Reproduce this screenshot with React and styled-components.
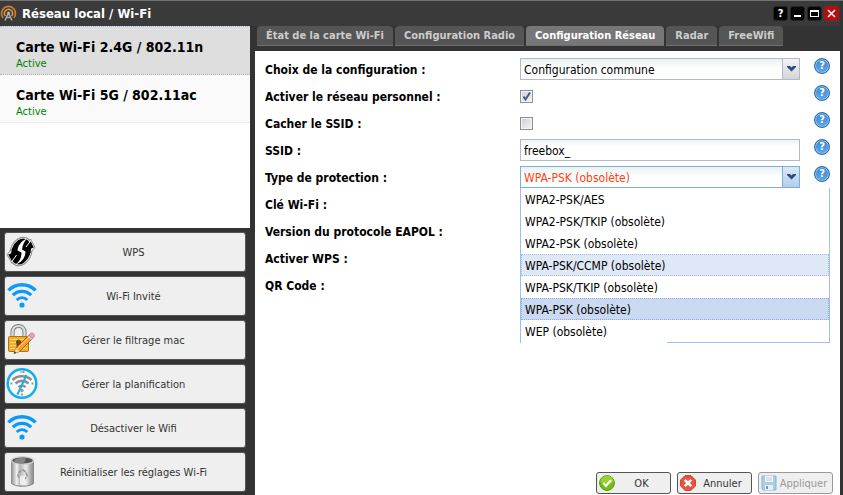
import React, { useState } from "react";
import styled, { createGlobalStyle } from "styled-components";

const GlobalStyle = createGlobalStyle`
  * {
    box-sizing: border-box;
  }

  body {
    margin: 0;
    background: #333;
    font-family: "DejaVu Sans Condensed", Tahoma, "Noto Sans", sans-serif;
    font-size: 12px;
    color: #000;
  }

  button,
  input,
  select {
    font: inherit;
    color: inherit;
    margin: 0;
  }
`;

const Window = styled.div`
  display: flex;
  flex-direction: column;
  min-height: 100vh;
  padding-right: 3px;
  background: #333;
  border-top: 1px solid #6f7373;
`;

const TitleBar = styled.header`
  display: flex;
  align-items: center;
  gap: 5px;
  height: 25px;
  background: #3a3a3a;
  color: #fff;

  h1 {
    flex: 1;
    margin: 0;
    font-size: 13px;
    line-height: 16px;
  }
`;

const WindowTools = styled.div`
  display: flex;
  gap: 4px;
  padding-right: 2px;
`;

const ToolButton = styled.button`
  display: grid;
  place-items: center;
  width: 13px;
  height: 13px;
  padding: 0;
  border: 0;
  border-radius: 2px;
  background: ${(props) => (props.$danger ? "#c3080b" : "#050505")};
  box-shadow: 0 0 0 1px ${(props) => (props.$danger ? "#8d2020" : "#252525")};
  color: #fff;
  font-weight: bold;
  font-size: 11px;
  line-height: 13px;
`;

const Body = styled.div`
  display: flex;
  flex: 1;
  gap: 5px;
`;

const Sidebar = styled.aside`
  display: flex;
  flex-direction: column;
  width: 250px;
`;

const CardList = styled.ul`
  flex: 1;
  margin: 0;
  padding: 0;
  list-style: none;
  background: #fff;
`;

const CardItem = styled.li`
  height: ${(props) => (props.$active ? 49 : 48)}px;
  padding: 12px 16px 0;
  background: ${(props) => (props.$active ? "#dedede" : "#fafafa")};
  border-bottom: 1px ${(props) => (props.$active ? "dotted #b4b4b4" : "solid #ededed")};
  ${(props) => props.$active && "border-top: 1px dotted #a3bae9;"}

  h2 {
    margin: 0;
    font-size: 14px;
    line-height: 17px;
  }

  p {
    margin: 0;
    font-size: 11px;
    line-height: 16px;
    color: #008000;
  }
`;

const ActionList = styled.div`
  display: flex;
  flex-direction: column;
  gap: 4px;
  padding: 4px 4px 3px;
`;

const ActionButton = styled.button`
  display: flex;
  align-items: center;
  height: 40px;
  padding: 0 1px;
  border: 1px solid #555;
  border-radius: 3px;
  background: #efefef;
  color: #333;
  font-size: 11px;

  svg {
    flex: none;
  }

  span {
    flex: 1;
    padding-right: 15px;
  }
`;

const Main = styled.main`
  display: flex;
  flex: 1;
  flex-direction: column;
`;

const Tabs = styled.nav`
  display: flex;
  gap: 2px;
  padding: 0 2px 5px;
`;

const Tab = styled.button`
  height: 20px;
  padding: 0 9px;
  border: 0;
  border-bottom: 1px solid #707070;
  border-radius: 4px 4px 0 0;
  background: ${(props) => (props.$active ? "#777" : "#555")};
  color: ${(props) => (props.$active ? "#fff" : "#ccc")};
  font-size: 11px;
  font-weight: bold;
  white-space: nowrap;
`;

const Panel = styled.section`
  display: flex;
  flex: 1;
  flex-direction: column;
  justify-content: space-between;
  background: #fff;
`;

const Form = styled.form`
  display: flex;
  flex-direction: column;
  gap: 5px;
  padding: 7px 10px 0;
`;

const Row = styled.div`
  display: flex;
  height: 22px;
`;

const Label = styled.label`
  width: 255px;
  font-weight: bold;
  font-size: 12px;
  line-height: 24px;
`;

const Field = styled.div`
  position: relative;
  display: flex;
  align-items: center;
  width: 280px;
  margin-right: 14px;
`;

const TextInput = styled.input`
  width: 100%;
  height: 22px;
  padding: 1px 3px 0;
  border: 1px solid #b5b8c8;
  background: linear-gradient(#eef2f2, #fff 6px);
  outline: 0;
`;

const SelectBox = styled.div`
  display: grid;
  width: 100%;
  height: 22px;
  border: 1px solid ${(props) => (props.$open ? "#7eadd9" : "#b5b8c8")};
  background: linear-gradient(#eaf1ef, #fff 10px);

  select,
  span {
    grid-area: 1 / 1;
  }

  select {
    appearance: none;
    padding: 1px 20px 0 3px;
    border: 0;
    outline: 0;
    background: transparent;
    color: ${(props) => (props.$open ? "#ff4013" : "#000")};
  }

  span {
    display: grid;
    place-items: center;
    justify-self: end;
    width: 17px;
    border-left: 1px solid ${(props) => (props.$open ? "#7eadd9" : "#b5b8c8")};
    background: ${(props) =>
      props.$open
        ? "linear-gradient(#dbe8f8, #b3cdec)"
        : "linear-gradient(#f4f4f4, #d4d4d8)"};
    pointer-events: none;
  }
`;

const CheckBox = styled.div`
  display: grid;

  input,
  svg {
    grid-area: 1 / 1;
  }

  input {
    appearance: none;
    width: 13px;
    height: 13px;
    border: 1px solid #8e8f8f;
    background: linear-gradient(135deg, #cbcfd5, #f6f6f6);
    box-shadow: inset 0 0 0 1px #f4f4f4;
  }

  svg {
    visibility: hidden;
    pointer-events: none;
  }

  input:checked + svg {
    visibility: visible;
  }
`;

const HelpButton = styled.button`
  display: grid;
  place-items: center;
  width: 16px;
  height: 16px;
  padding: 0;
  border: 1px solid #1f66b0;
  border-radius: 50%;
  background: linear-gradient(#3b86cf, #61a8e6);
  box-shadow: inset 0 0 0 1px #8fc0ec;
  color: #fff;
  font-size: 11px;
  font-weight: bold;
  line-height: 14px;
`;

const OptionList = styled.ul`
  position: absolute;
  z-index: 1;
  top: 22px;
  left: 0;
  width: 310px;
  margin: 0;
  padding: 0;
  list-style: none;
  background: #fff;
  border: solid #98c0f4;
  border-width: 0 1px;

  &::after {
    content: "";
    display: block;
    height: 1px;
    margin-left: 146px;
    background: #98c0f4;
  }
`;

const optionColors = {
  hover: "background: #dfe8f6; border-color: #a3bae9;",
  selected: "background: #cbdaf0; border-color: #8eabe4;"
};

const Option = styled.li`
  height: 22px;
  padding: 1px 3px 0;
  border: 1px dotted #fff;
  line-height: 20px;
  cursor: pointer;
  ${(props) => optionColors[props.$state]}
`;

const Footer = styled.footer`
  display: flex;
  justify-content: flex-end;
  gap: 6px;
  padding: 0 7px 1px;
`;

const FooterButton = styled.button`
  display: flex;
  align-items: center;
  width: 75px;
  height: 22px;
  padding: 0 2px;
  border: 1px solid #555;
  border-radius: 3px;
  background: #efefef;
  color: #333;
  font-size: 11px;

  svg {
    flex: none;
  }

  span {
    flex: 1;
  }

  &:disabled {
    border-color: #999;
    color: #999;
  }
`;

const AntennaIcon = () => (
  <svg width="17" height="17" viewBox="0 0 17 17" fill="none">
    <path d="M3.2 13A7 7 0 1 1 13.8 13" stroke="#c87f35" strokeWidth="1.7" />
    <path d="M5.4 11A4 4 0 1 1 11.6 11" stroke="#e29a45" strokeWidth="1.5" />
    <path d="M8.5 8L5 15.5M8.5 8L12 15.5M6.5 12.5H10.5" stroke="#aaa" strokeWidth="1.5" />
    <circle cx="8.5" cy="8" r="1.5" fill="#bbb" />
  </svg>
);

const WpsIcon = () => (
  <svg width="32" height="32" viewBox="0 0 32 32">
    <ellipse cx="15" cy="15.5" rx="10.6" ry="14.6" transform="rotate(20 15 15.5)" fill="#fff" stroke="#888" />
    <path d="M1 18.5L7 12L12.500 18.500L6 27.500Z" fill="#fff" stroke="#888" />
    <path d="M29 11.500L23 18L18 11L24.500 3Z" fill="#fff" stroke="#888" />
    <ellipse cx="15" cy="15.5" rx="9.4" ry="13.4" transform="rotate(20 15 15.5)" fill="#000" />
    <path d="M21 2.500C15.500 4.500 12 9.500 11.500 14.500L15.500 16.500C15.500 21 14 25.500 9.500 28.500C16 26.500 19.500 21 19.500 15.500L16 13.500C16.500 9 18 6 21 2.500Z" fill="#fff" />
    <path d="M2.200 18.500L6 17L11 18L6 25.500Z" fill="#000" />
    <path d="M27.800 11.500L24 13L19.500 12L24.500 5Z" fill="#000" />
    <path d="M6 25.500L10.500 19" stroke="#fff" />
    <path d="M24.500 5L20 11" stroke="#fff" />
  </svg>
);

const WifiIcon = () => (
  <svg width="32" height="32" viewBox="0 0 32 32" fill="none" stroke="#0b99fb">
    <path d="M2.4 10.4C10 2.8 22 2.8 29.6 10.4" strokeWidth="3.4" />
    <path d="M6.8 15.2C12 10 20 10 25.2 15.2" strokeWidth="3.2" />
    <path d="M10.7 20C13.8 17 18.2 17 21.3 20" strokeWidth="3" />
    <circle cx="16" cy="25" r="2.6" fill="#0b99fb" stroke="none" />
  </svg>
);

const LockIcon = () => (
  <svg width="32" height="32" viewBox="0 0 32 32">
    <path d="M6.5 14V8C6.5 0 18.5 0 18.5 8V14" fill="none" stroke="#858585" strokeWidth="4.2" />
    <path d="M6.5 14V8C6.5 0 18.5 0 18.5 8V14" fill="none" stroke="#dedede" strokeWidth="2.2" />
    <rect x="2.5" y="12.5" width="20" height="15" rx="1" fill="#f1ae2e" stroke="#b37309" />
    <path d="M4 15.5H21M4 18.5H21M4 21.5H21M4 24.5H21" stroke="#ffd466" />
    <path d="M12.5 15.5a2.6 2.6 0 0 1 2 4.2V24h-4v-4.3a2.6 2.6 0 0 1 2-4.2Z" fill="#6a460c" />
    <path d="M8 29.5L10 24L23.500 10.500L27 14L13.500 27.500Z" fill="#ff9d2b" stroke="#a65e15" />
    <path d="M8 29.5L10 24L13.500 27.500Z" fill="#f8dda9" />
    <path d="M8 29.5L8.800 27.300L10.300 28.700Z" fill="#333" />
    <path d="M11.500 24.500L24 12" stroke="#ffd27d" />
    <path d="M21.500 12.500L23 11L26.500 14.500L25 16Z" fill="#cacddd" />
    <path d="M23 11L25 9C26.500 8 29.500 11 28.500 12.500L26.500 14.500Z" fill="#eaa4af" stroke="#bd7181" strokeWidth="0.6" />
  </svg>
);

const ScheduleIcon = () => (
  <svg width="32" height="32" viewBox="0 0 32 32" fill="none">
    <circle cx="16" cy="15.500" r="14.300" fill="#fafafa" stroke="#12aff0" strokeWidth="2.500" />
    <path d="M14.500 4h1M16.500 4h2M4.500 15.500h2M25.500 15.500h2M15 26.500h2" stroke="#999" strokeWidth="1.800" />
    <g stroke="#8f8f8f" strokeWidth="2.600">
      <path d="M6.500 12C11.500 7 20.500 7 25.500 12" />
      <path d="M9.500 15.500C13 12 19 12 22.500 15.500" />
      <path d="M12.500 19.200C14.500 17.200 17.500 17.200 19.500 19.200" />
    </g>
    <circle cx="16" cy="22.500" r="1.700" fill="#999" />
    <path d="M20.500 7L11.500 26.500" stroke="#12aff0" strokeWidth="2" />
  </svg>
);

const TrashIcon = () => (
  <svg width="32" height="32" viewBox="0 0 32 32">
    <defs>
      <linearGradient id="metal">
        <stop offset="0" stopColor="#8b8b8b" />
        <stop offset="0.25" stopColor="#f1f1f1" />
        <stop offset="0.4" stopColor="#b5b5b5" />
        <stop offset="0.65" stopColor="#eee" />
        <stop offset="0.85" stopColor="#aaa" />
        <stop offset="1" stopColor="#858585" />
      </linearGradient>
    </defs>
    <path d="M5 4V27C8 32 25 32 28 27V4Z" fill="url(#metal)" />
    <path d="M5 26.500C8 31.500 25 31.500 28 26.500" fill="none" stroke="#888" />
    <ellipse cx="16.500" cy="4.500" rx="11" ry="3.700" fill="#555" stroke="#d0d0d0" strokeWidth="1.300" />
    <path d="M8 5.500C11 8 16 7.500 18 7.500L20 2.500C13 1 9 2.500 8 5.500Z" fill="#868686" />
    <path d="M13 22L12 19L14 15L17 14L20 16L21 20L19 23" fill="none" stroke="#999" strokeWidth="1.800" strokeDasharray="4 1" />
    <rect x="14" y="20" width="5" height="9" fill="#f5f5f5" opacity="0.8" />
  </svg>
);

const Chevron = () => (
  <svg width="9" height="6" viewBox="0 0 9 6">
    <path d="M0 0H3L4.500 1.500L6 0H9V1L4.500 5.500L0 1Z" fill="#2d4a87" />
  </svg>
);

const OkIcon = () => (
  <svg width="16" height="16" viewBox="0 0 16 16">
    <circle cx="8" cy="8" r="7.400" fill="#79bd10" stroke="#559b11" />
    <path d="M1.500 7A6.500 6.500 0 0 1 14.500 7Q8 10 1.500 7Z" fill="#96d332" />
    <path d="M4.200 8L7 10.800L12 5.300" fill="none" stroke="#fff" strokeWidth="2.300" />
  </svg>
);

const CancelIcon = () => (
  <svg width="16" height="16" viewBox="0 0 16 16">
    <path d="M5 0.600H11L15.400 5V11L11 15.400H5L0.600 11V5Z" fill="#e9543d" stroke="#c9402f" strokeLinejoin="round" />
    <path d="M4.800 4.800L11.200 11.200M11.200 4.800L4.800 11.200" stroke="#fff" strokeWidth="2.600" />
  </svg>
);

const SaveIcon = () => (
  <svg width="16" height="16" viewBox="0 0 16 16">
    <path d="M1 1H15V15H2L1 14Z" fill="#a5cfe6" stroke="#87b9d5" />
    <rect x="4" y="1" width="8" height="6" fill="#f4f4f4" />
    <path d="M5 3H11M5 5H11" stroke="#ccc" />
    <rect x="4" y="10" width="8" height="5" fill="#e9eef1" />
    <rect x="5" y="11" width="2" height="3" fill="#8195a1" />
  </svg>
);

const ACTIONS = [
  { label: "WPS", Icon: WpsIcon },
  { label: "Wi-Fi Invité", Icon: WifiIcon },
  { label: "Gérer le filtrage mac", Icon: LockIcon },
  { label: "Gérer la planification", Icon: ScheduleIcon },
  { label: "Désactiver le Wifi", Icon: WifiIcon },
  { label: "Réinitialiser les réglages Wi-Fi", Icon: TrashIcon }
];

const TABS = [
  "État de la carte Wi-Fi",
  "Configuration Radio",
  "Configuration Réseau",
  "Radar",
  "FreeWifi"
];

const PROTECTIONS = [
  "WPA2-PSK/AES",
  "WPA2-PSK/TKIP (obsolète)",
  "WPA2-PSK (obsolète)",
  "WPA-PSK/CCMP (obsolète)",
  "WPA-PSK/TKIP (obsolète)",
  "WPA-PSK (obsolète)",
  "WEP (obsolète)"
];

const FormRow = ({ label, id, help, children }) => (
  <Row>
    <Label htmlFor={id}>{label} :</Label>
    {children && <Field>{children}</Field>}
    {help && (
      <HelpButton type="button" aria-label={"Aide : " + label}>
        ?
      </HelpButton>
    )}
  </Row>
);

const Select = ({ id, options, open, ...rest }) => (
  <SelectBox $open={open}>
    <select id={id} {...rest}>
      {options.map((option) => (
        <option key={option}>{option}</option>
      ))}
    </select>
    <span>
      <Chevron />
    </span>
  </SelectBox>
);

const Check = ({ id, defaultChecked }) => (
  <CheckBox>
    <input id={id} type="checkbox" defaultChecked={defaultChecked} />
    <svg width="13" height="13" viewBox="0 0 13 13">
      <path d="M3.500 6.500L5.500 9.500L10 2.500" fill="none" stroke="#41578f" strokeWidth="2" />
    </svg>
  </CheckBox>
);

export default function App() {
  const [tab, setTab] = useState("Configuration Réseau");
  const [protection, setProtection] = useState("WPA-PSK (obsolète)");
  const [hovered, setHovered] = useState("WPA-PSK/CCMP (obsolète)");
  const [open, setOpen] = useState(true);

  const choose = (option) => {
    setProtection(option);
    setOpen(false);
  };

  const optionState = (option) => {
    if (option === protection) return "selected";
    return option === hovered ? "hover" : undefined;
  };

  return (
    <>
      <GlobalStyle />
      <Window>
        <TitleBar>
          <AntennaIcon />
          <h1>Réseau local / Wi-Fi</h1>
          <WindowTools>
            <ToolButton aria-label="Aide">?</ToolButton>
            <ToolButton aria-label="Réduire">
              <svg width="9" height="9" viewBox="0 0 9 9">
                <path d="M1 7H8" stroke="#fff" strokeWidth="2" />
              </svg>
            </ToolButton>
            <ToolButton aria-label="Agrandir">
              <svg width="9" height="9" viewBox="0 0 9 9">
                <path d="M0 1H9V8H0ZM1 3V7H8V3Z" fill="#fff" fillRule="evenodd" />
              </svg>
            </ToolButton>
            <ToolButton aria-label="Fermer" $danger>
              <svg width="9" height="9" viewBox="0 0 9 9">
                <path d="M1 1L8 8M8 1L1 8" stroke="#fff" strokeWidth="1.5" />
              </svg>
            </ToolButton>
          </WindowTools>
        </TitleBar>
        <Body>
          <Sidebar>
            <CardList>
              <CardItem $active>
                <h2>Carte Wi-Fi 2.4G / 802.11n</h2>
                <p>Active</p>
              </CardItem>
              <CardItem>
                <h2>Carte Wi-Fi 5G / 802.11ac</h2>
                <p>Active</p>
              </CardItem>
            </CardList>
            <ActionList>
              {ACTIONS.map(({ label, Icon }) => (
                <ActionButton key={label}>
                  <Icon />
                  <span>{label}</span>
                </ActionButton>
              ))}
            </ActionList>
          </Sidebar>
          <Main>
            <Tabs>
              {TABS.map((name) => (
                <Tab key={name} $active={name === tab} onClick={() => setTab(name)}>
                  {name}
                </Tab>
              ))}
            </Tabs>
            <Panel>
              <Form>
                <FormRow label="Choix de la configuration" id="config" help>
                  <Select id="config" options={["Configuration commune"]} />
                </FormRow>
                <FormRow label="Activer le réseau personnel" id="enabled" help>
                  <Check id="enabled" defaultChecked />
                </FormRow>
                <FormRow label="Cacher le SSID" id="hide" help>
                  <Check id="hide" />
                </FormRow>
                <FormRow label="SSID" id="ssid" help>
                  <TextInput id="ssid" defaultValue="freebox_" />
                </FormRow>
                <FormRow label="Type de protection" id="protection" help>
                  <Select
                    id="protection"
                    options={PROTECTIONS}
                    open={open}
                    value={protection}
                    onChange={(e) => choose(e.target.value)}
                  />
                  {open && (
                    <OptionList role="listbox">
                      {PROTECTIONS.map((option) => (
                        <Option
                          key={option}
                          role="option"
                          aria-selected={option === protection}
                          $state={optionState(option)}
                          onMouseEnter={() => setHovered(option)}
                          onClick={() => choose(option)}
                        >
                          {option}
                        </Option>
                      ))}
                    </OptionList>
                  )}
                </FormRow>
                <FormRow label="Clé Wi-Fi" />
                <FormRow label="Version du protocole EAPOL" />
                <FormRow label="Activer WPS" />
                <FormRow label="QR Code" />
              </Form>
              <Footer>
                <FooterButton>
                  <OkIcon />
                  <span>OK</span>
                </FooterButton>
                <FooterButton>
                  <CancelIcon />
                  <span>Annuler</span>
                </FooterButton>
                <FooterButton disabled>
                  <SaveIcon />
                  <span>Appliquer</span>
                </FooterButton>
              </Footer>
            </Panel>
          </Main>
        </Body>
      </Window>
    </>
  );
}
